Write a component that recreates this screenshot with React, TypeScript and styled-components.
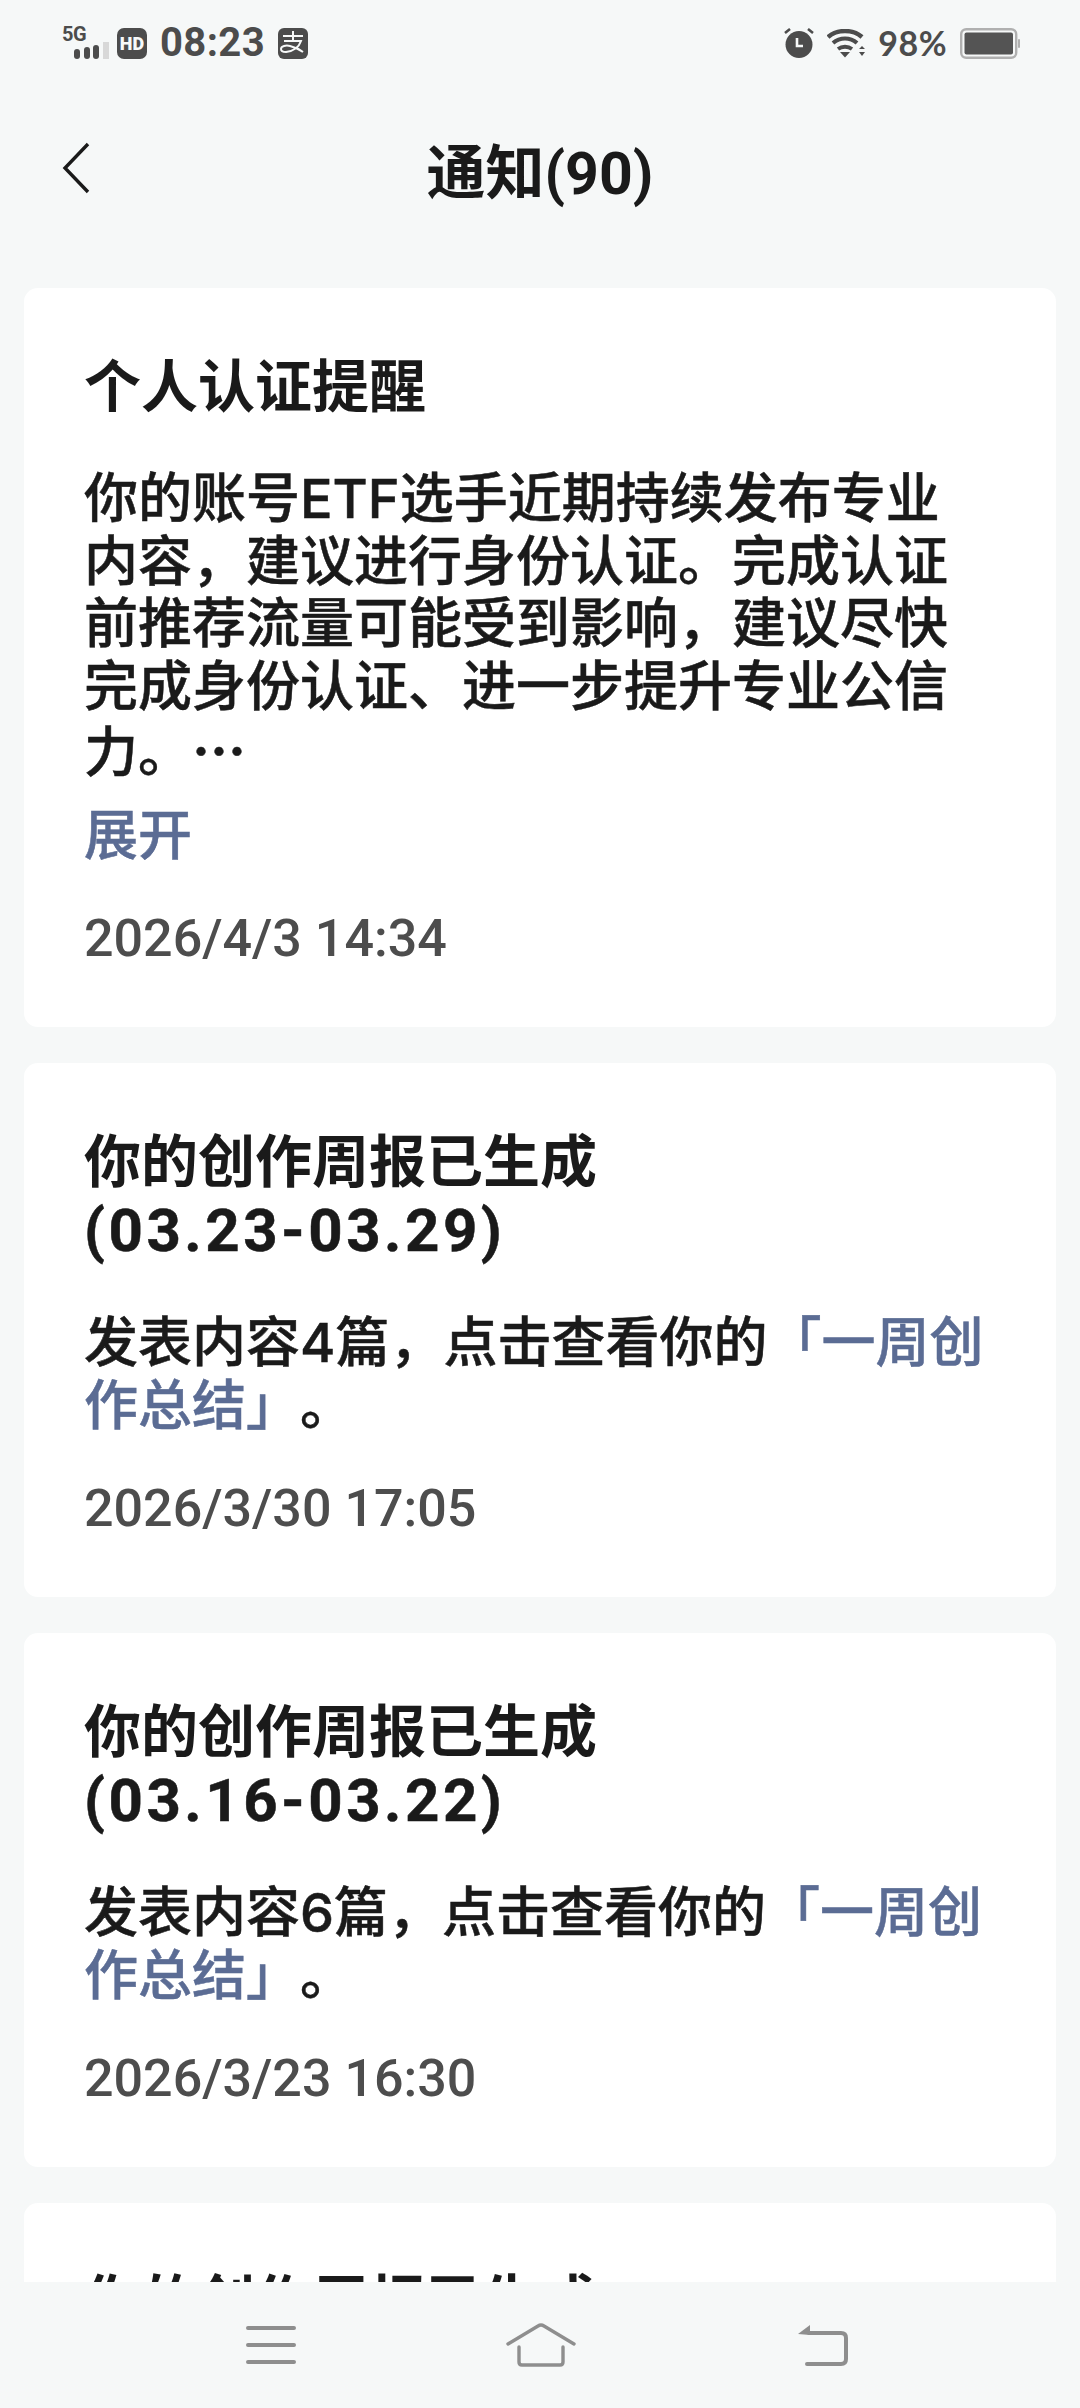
import React from "react";
import styled, { createGlobalStyle } from "styled-components";

const CJK = `"Noto Sans CJK SC", "Noto Sans", sans-serif`;
const TEXT_FONT = `"Inter", ${CJK}`;
const NUMBER_FONT = `"Roboto", ${CJK}`;

interface INotice {
  id: number;
  title: React.ReactNode;
  body: React.ReactNode;
  time: string;
}

function App() {
  return (
    <Page>
      <GlobalStyle />
      <StatusBar>
        <StatusGroup>
          <Signal>
            <SignalLabel>5G</SignalLabel>
            <svg width="36" height="17" viewBox="0 0 36 17">
              <rect x="0" y="7" width="6" height="10" rx="3" fill="#4c4c4c" />
              <rect x="10" y="5" width="6" height="12" rx="3" fill="#4c4c4c" />
              <rect x="19" y="3" width="6" height="14" rx="3" fill="#4c4c4c" />
              <rect x="29" y="0" width="6" height="17" fill="#d8d8d8" />
            </svg>
          </Signal>
          <StatusBadge>HD</StatusBadge>
          <Clock>08:23</Clock>
          <AppBadge>
            <svg width="30" height="31" viewBox="0 0 30 31">
              <rect width="30" height="31" rx="6" fill="#4c4c4c" />
              <path
                d="M5 8h20M15 3v10M6 13h17c-2 6-7 10-15 11-3 0-5-1-5-3 0-3 5-4 9-3 4 1 9 3 13 6"
                fill="none"
                stroke="#f7f9f9"
                strokeWidth="2"
              />
            </svg>
          </AppBadge>
        </StatusGroup>
        <StatusGroup>
          <svg width="30" height="30" viewBox="0 0 30 30">
            <circle cx="15" cy="16.5" r="13.5" fill="#4c4c4c" />
            <path d="M13 10v8h6" fill="none" stroke="#f7f9f9" strokeWidth="2.6" />
            <path d="M1 5l5-4M29 5l-5-4" stroke="#4c4c4c" strokeWidth="2.6" />
          </svg>
          <svg width="38" height="29" viewBox="0 0 38 29">
            <path d="M1 8C10 0 26 0 35 8" fill="none" stroke="#4c4c4c" strokeWidth="4.4" />
            <path d="M6 14c7-6 17-6 24 0" fill="none" stroke="#4c4c4c" strokeWidth="4.2" />
            <path d="M11 20c4-3 10-3 14 0" fill="none" stroke="#4c4c4c" strokeWidth="3.8" />
            <path d="M13 23h10l-5 5.5z" fill="#4c4c4c" />
            <path d="M32 20l3-3 3 3zM32 23h6l-3 4z" fill="#4c4c4c" />
          </svg>
          <Percent>98%</Percent>
          <svg width="60" height="31" viewBox="0 0 60 31">
            <rect x="1.2" y="1.2" width="55" height="28.6" rx="5" fill="none" stroke="#b0b0b0" strokeWidth="2.4" />
            <rect x="4.5" y="4.5" width="48.5" height="22" rx="2" fill="#545454" />
            <rect x="58" y="11" width="2" height="9" rx="1" fill="#b0b0b0" />
          </svg>
        </StatusGroup>
      </StatusBar>

      <Header>
        <BackButton>
          <svg width="28" height="52" viewBox="0 0 28 52">
            <path d="M26 2L3 26l23 24" fill="none" stroke="#1a1a1a" strokeWidth="3.4" />
          </svg>
        </BackButton>
        <Title>通知(90)</Title>
      </Header>

      <NoticeList>
        <NoticeCard>
          <NoticeTitle>{notices[0].title}</NoticeTitle>
          <NoticeBody>{notices[0].body}</NoticeBody>
          <Expand>展开</Expand>
          <NoticeTime>{notices[0].time}</NoticeTime>
        </NoticeCard>
        {notices.slice(1).map((notice) => (
          <NoticeCard key={notice.id}>
            <NoticeTitle>{notice.title}</NoticeTitle>
            <NoticeBody>{notice.body}</NoticeBody>
            <NoticeTime>{notice.time}</NoticeTime>
          </NoticeCard>
        ))}
        <NoticeCard>
          <NoticeTitle>你的创作周报已生成</NoticeTitle>
        </NoticeCard>
      </NoticeList>

      <NavBar>
        <svg width="50" height="38" viewBox="0 0 50 38">
          <path d="M2 2h46M2 19h46M2 36h46" stroke="#8e8e8e" strokeWidth="4" strokeLinecap="round" />
        </svg>
        <HomeIcon width="70" height="44" viewBox="0 0 70 44">
          <path
            d="M2 21L32 3q3-2 6 0L68 21M13 24v15q0 3 3 3h38q3 0 3-3V24"
            fill="none"
            stroke="#8e8e8e"
            strokeWidth="3.4"
            strokeLinecap="round"
          />
        </HomeIcon>
        <svg width="52" height="42" viewBox="0 0 52 42">
          <path d="M12 9h32q5 0 5 5v21q0 5-5 5H10" fill="none" stroke="#8e8e8e" strokeWidth="4" strokeLinecap="round" />
          <path d="M1 10L13 1v10z" fill="#8e8e8e" />
        </svg>
      </NavBar>
    </Page>
  );
}

export default App;

const GlobalStyle = createGlobalStyle`
  html, body {
    margin: 0;
    padding: 0;
    background: #f6f8f8;
  }
  * {
    box-sizing: border-box;
  }
`;

const Page = styled.div`
  width: 1080px;
  height: 2408px;
  display: flex;
  flex-direction: column;
  overflow: hidden;
  background: #f6f8f8;
  font-family: ${TEXT_FONT};
  text-spacing-trim: space-all;
`;

const StatusBar = styled.div`
  height: 86px;
  flex: none;
  padding: 0 60px 0 62px;
  display: flex;
  justify-content: space-between;
  align-items: center;
`;

const StatusGroup = styled.div`
  display: flex;
  align-items: center;
  gap: 13px;
`;

const Signal = styled.div`
  width: 48px;
  height: 34px;
  margin-right: -6px;
  position: relative;
  svg {
    position: absolute;
    right: 0;
    bottom: 1px;
  }
`;

const SignalLabel = styled.span`
  position: absolute;
  left: 0;
  top: -3px;
  font: 700 20px/22px "Roboto", sans-serif;
  letter-spacing: -0.5px;
  color: #4c4c4c;
`;

const StatusBadge = styled.span`
  width: 30px;
  height: 31px;
  border-radius: 7px;
  background: #4c4c4c;
  color: #f7f9f9;
  font: 900 18px/31px "Roboto", sans-serif;
  text-align: center;
`;

const Clock = styled.span`
  font: 700 40px/44px "Roboto", sans-serif;
  letter-spacing: 0.4px;
  color: #4c4c4c;
`;

const AppBadge = styled.span`
  display: flex;
`;

const Percent = styled.span`
  font: 700 34px/40px "Lato", sans-serif;
  letter-spacing: 0.5px;
  color: #4c4c4c;
`;

const Header = styled.header`
  height: 164px;
  flex: none;
  padding: 0 62px;
  display: grid;
  grid-template-columns: 1fr auto 1fr;
  align-items: center;
`;

const BackButton = styled.div`
  display: flex;
  justify-self: start;
`;

const Title = styled.h1`
  margin: 0;
  font-family: ${NUMBER_FONT};
  font-size: 59px;
  font-weight: 700;
  color: #1a1a1a;
`;

const NoticeList = styled.div`
  flex: 1;
  min-height: 0;
  overflow: hidden;
  padding: 38px 24px 0;
  display: flex;
  flex-direction: column;
  gap: 36px;
`;

const NoticeCard = styled.section`
  flex: none;
  background: #ffffff;
  border-radius: 14px;
  padding: 66px 60px 58px;
`;

const NoticeTitle = styled.h2`
  margin: 0 0 46px;
  font-family: ${NUMBER_FONT};
  font-size: 57px;
  line-height: 68px;
  font-weight: 700;
  color: #1a1a1a;
`;

const DateRange = styled.span`
  font-size: 60px;
  letter-spacing: 3.5px;
  -webkit-text-stroke: 0.5px currentColor;
`;

const NoticeBody = styled.p`
  margin: 0;
  font-size: 54px;
  line-height: 62.5px;
  font-weight: 500;
  color: #1a1a1a;
  -webkit-text-stroke: 0.5px currentColor;
`;

const Accent = styled.span`
  color: #5b6c94;
`;

const Dots = styled.span`
  font-family: ${CJK};
  font-weight: 700;
`;

const Expand = styled.div`
  margin-top: 20px;
  font-size: 54px;
  line-height: 62.5px;
  font-weight: 500;
  color: #5b6c94;
  -webkit-text-stroke: 0.5px currentColor;
`;

const NoticeTime = styled.div`
  margin-top: 42px;
  font-family: ${NUMBER_FONT};
  font-size: 52px;
  line-height: 60px;
  font-weight: 500;
  color: #4d4d4d;
`;

const NavBar = styled.nav`
  height: 126px;
  flex: none;
  background: #f6f8f8;
  display: flex;
  align-items: center;
  justify-content: space-between;
  padding: 0 231px 0 246px;
`;

const HomeIcon = styled.svg`
  margin-right: 12px;
`;

const notices: INotice[] = [
  {
    id: 1,
    title: "个人认证提醒",
    body: (
      <>
        你的账号ETF选手近期持续发布专业
        <br />
        内容，建议进行身份认证。完成认证
        <br />
        前推荐流量可能受到影响，建议尽快
        <br />
        完成身份认证、进一步提升专业公信
        <br />
        力。<Dots>…</Dots>
      </>
    ),
    time: "2026/4/3 14:34",
  },
  {
    id: 2,
    title: (
      <>
        你的创作周报已生成
        <br />
        <DateRange>(03.23-03.29)</DateRange>
      </>
    ),
    body: (
      <>
        发表内容4篇，点击查看你的<Accent>「一周创</Accent>
        <br />
        <Accent>作总结」</Accent>。
      </>
    ),
    time: "2026/3/30 17:05",
  },
  {
    id: 3,
    title: (
      <>
        你的创作周报已生成
        <br />
        <DateRange>(03.16-03.22)</DateRange>
      </>
    ),
    body: (
      <>
        发表内容6篇，点击查看你的<Accent>「一周创</Accent>
        <br />
        <Accent>作总结」</Accent>。
      </>
    ),
    time: "2026/3/23 16:30",
  },
];
